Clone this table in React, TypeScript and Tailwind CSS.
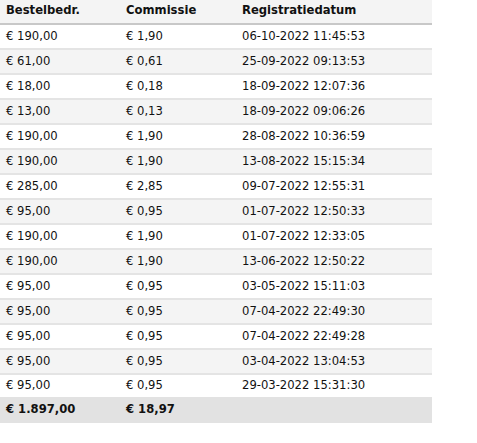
const rows: [string, string, string][] = [
  ["€ 190,00", "€ 1,90", "06-10-2022 11:45:53"],
  ["€ 61,00", "€ 0,61", "25-09-2022 09:13:53"],
  ["€ 18,00", "€ 0,18", "18-09-2022 12:07:36"],
  ["€ 13,00", "€ 0,13", "18-09-2022 09:06:26"],
  ["€ 190,00", "€ 1,90", "28-08-2022 10:36:59"],
  ["€ 190,00", "€ 1,90", "13-08-2022 15:15:34"],
  ["€ 285,00", "€ 2,85", "09-07-2022 12:55:31"],
  ["€ 95,00", "€ 0,95", "01-07-2022 12:50:33"],
  ["€ 190,00", "€ 1,90", "01-07-2022 12:33:05"],
  ["€ 190,00", "€ 1,90", "13-06-2022 12:50:22"],
  ["€ 95,00", "€ 0,95", "03-05-2022 15:11:03"],
  ["€ 95,00", "€ 0,95", "07-04-2022 22:49:30"],
  ["€ 95,00", "€ 0,95", "07-04-2022 22:49:28"],
  ["€ 95,00", "€ 0,95", "03-04-2022 13:04:53"],
  ["€ 95,00", "€ 0,95", "29-03-2022 15:31:30"],
];

export default function App() {
  return (
    <div className="min-h-screen bg-white font-['DejaVu_Sans',sans-serif] text-[11.6px] text-[#111]">
      <table className="w-[432px] table-fixed border-collapse">
        <colgroup>
          <col className="w-[120px]" />
          <col className="w-[116px]" />
          <col className="w-[196px]" />
        </colgroup>
        <thead>
          <tr className="h-[24px] border-b-2 border-[#c8c8c8] bg-[#f4f4f4] text-left font-bold">
            <th className="px-[6px] pb-[2px]">Bestelbedr.</th>
            <th className="px-[6px] pb-[2px]">Commissie</th>
            <th className="px-[6px] pb-[2px]">Registratiedatum</th>
          </tr>
        </thead>
        <tbody>
          {rows.map((r, i) => (
            <tr
              key={i}
              className={
                (i % 2 === 1 ? "bg-[#f4f4f4] " : "bg-white ") +
                (i < rows.length - 1 ? "h-[25px] border-b-2 border-[#e4e4e4]" : "h-[23px]")
              }
            >
              <td className="px-[6px]">{r[0]}</td>
              <td className="px-[6px]">{r[1]}</td>
              <td className="px-[6px]">{r[2]}</td>
            </tr>
          ))}
        </tbody>
        <tfoot>
          <tr className="h-[26px] bg-[#e2e2e2] font-bold">
            <td className="px-[6px]">€ 1.897,00</td>
            <td className="px-[6px]">€ 18,97</td>
            <td className="px-[6px]"></td>
          </tr>
        </tfoot>
      </table>
    </div>
  );
}
